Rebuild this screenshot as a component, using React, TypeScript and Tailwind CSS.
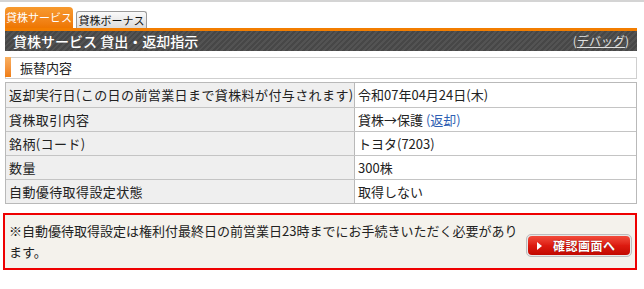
import React from "react";

const rows: { label: string; value: React.ReactNode }[] = [
  { label: "返却実行日(この日の前営業日まで貸株料が付与されます)", value: "令和07年04月24日(木)" },
  {
    label: "貸株取引内容",
    value: (
      <>
        貸株→保護 <span className="text-[#2f5fb3]">(返却)</span>
      </>
    ),
  },
  { label: "銘柄(コード)", value: "トヨタ(7203)" },
  { label: "数量", value: "300株" },
  { label: "自動優待取得設定状態", value: "取得しない" },
];

export default function App() {
  return (
    <div
      className="w-[644px] h-[289px] bg-white text-[#222] overflow-hidden"
      style={{ fontFamily: '"Noto Sans CJK JP", "Noto Sans", sans-serif' }}
    >
      <div className="h-[2px] bg-[#d4d4d4]" />
      <div className="pl-[5px] pr-[7px]">
        {/* tabs */}
        <div className="flex items-end gap-[3px] pt-[5px] h-[26px]">
          <div className="h-[21px] w-[68px] rounded-t-[4px] bg-gradient-to-b from-[#f79a2e] to-[#ee7600] text-white text-[11px] leading-[21px] text-center whitespace-nowrap">
            貸株サービス
          </div>
          <div className="h-[17px] w-[71px] rounded-t-[3px] border border-b-0 border-[#9a9a9a] bg-gradient-to-b from-[#fafafa] to-[#dcdcdc] text-[11px] leading-[16px] text-center text-[#111] whitespace-nowrap">
            貸株ボーナス
          </div>
        </div>
        {/* header */}
        <div className="border-t-[3px] border-[#f27d00] h-[23px] flex items-center justify-between px-[8px] bg-[repeating-linear-gradient(135deg,#474747_0px,#474747_2px,#535353_2px,#535353_4px)]">
          <span className="text-white text-[14px] font-medium leading-none">
            貸株サービス 貸出・返却指示
          </span>
          <span className="text-[#e0e0e0] text-[12px] leading-none">
            (<span className="underline">デバッグ</span>)
          </span>
        </div>
        {/* section title */}
        <div className="mt-[6px] h-[22px] border border-[#cfcfcf] flex items-stretch">
          <div className="w-[6px] mt-[-1px] mb-[1px] ml-[-1px] bg-gradient-to-b from-[#f9b060] to-[#ef7d10]" />
          <div className="pl-[9px] text-[13px] leading-[20px] text-[#222]">振替内容</div>
        </div>
        {/* table */}
        <div className="mt-[3px] border border-[#b9b9b9]">
          {rows.map((r, i) => (
            <div
              key={i}
              className={`flex h-[24px] ${i > 0 ? "border-t border-[#c4c4c4]" : ""}`}
            >
              <div className="w-[349px] bg-[#efefef] border-r border-[#b9b9b9] pl-[3px] text-[13px] leading-[23px] whitespace-nowrap tracking-[0.4px]">
                {r.label}
              </div>
              <div className="flex-1 pl-[3px] text-[13px] leading-[23px] whitespace-nowrap">
                {r.value}
              </div>
            </div>
          ))}
        </div>
      </div>
      {/* notice */}
      <div className="ml-[3px] mr-[7px] mt-[9px] h-[57px] border-2 border-[#ee0000] bg-[#f4f2ec] flex items-start justify-between pl-[4px] pr-[3px]">
        <div className="pt-[5px] text-[13px] leading-[21px] text-[#222]">
          ※自動優待取得設定は権利付最終日の前営業日23時までにお手続きいただく必要があり
          <br />
          ます。
        </div>
        <div className="mt-[19px] rounded-[5px] border border-[#bdbdbd] bg-[#e8e8e8] p-[1px]">
          <div className="w-[102px] h-[19px] rounded-[4px] bg-gradient-to-b from-[#f24a3a] via-[#dd1a10] to-[#c20800] flex items-center pl-[9px] gap-[11px]">
            <svg width="5" height="8" viewBox="0 0 5 8">
              <path d="M0 0 L5 4 L0 8 Z" fill="#fff" />
            </svg>
            <span
              className="text-white text-[12px] font-bold leading-none tracking-[0.5px]"
              style={{ textShadow: "0 0 1px #600" }}
            >
              確認画面へ
            </span>
          </div>
        </div>
      </div>
    </div>
  );
}
